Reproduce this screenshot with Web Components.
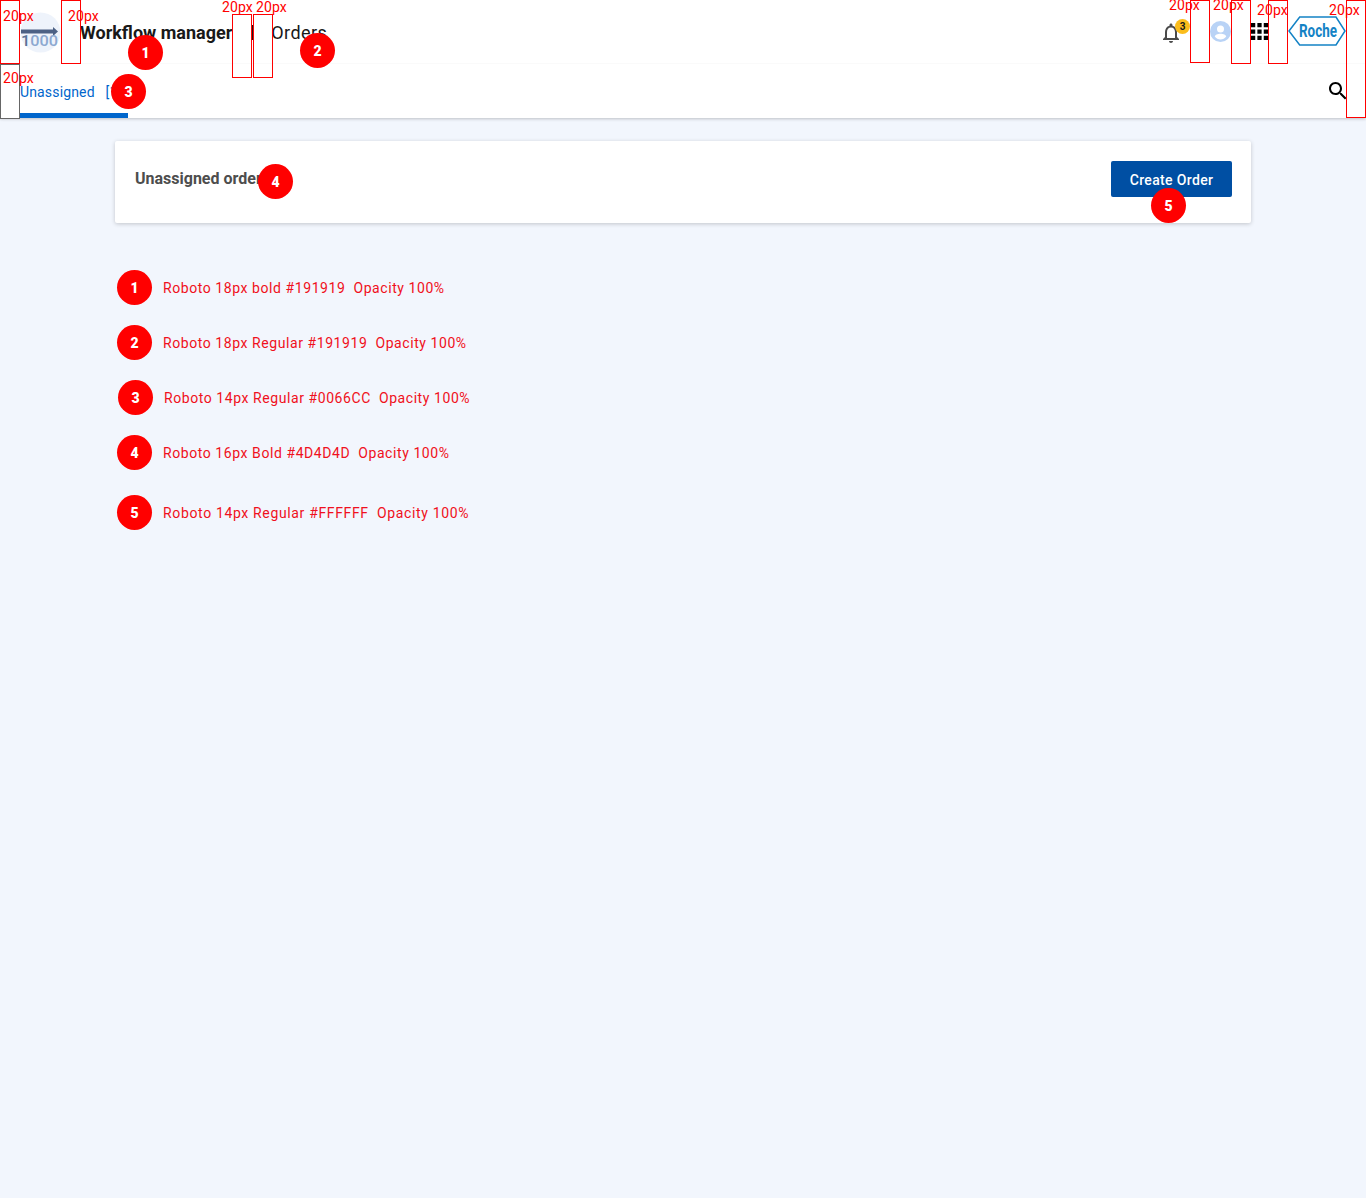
<!DOCTYPE html>
<html lang="en">
<head>
<meta charset="utf-8">
<title>Workflow manager</title>
<style>
  html, body { margin: 0; padding: 0; }
  body { background: #f2f6fd; font-family: Roboto, "Liberation Sans", sans-serif; min-height: 1198px; position: relative; overflow-x: hidden; }
</style>
</head>
<body>
<app-header title-text="Workflow manager" section="Orders" count="3"></app-header>
<tab-bar label="Unassigned" count="[1]"></tab-bar>

<main-area>
  <order-card title-text="Unassigned orders" action="Create Order"></order-card>
  <spec-list>
    <spec-row n="1">Roboto 18px bold #191919  Opacity 100%</spec-row>
    <spec-row n="2">Roboto 18px Regular #191919  Opacity 100%</spec-row>
    <spec-row n="3" nudge>Roboto 14px Regular #0066CC  Opacity 100%</spec-row>
    <spec-row n="4">Roboto 16px Bold #4D4D4D  Opacity 100%</spec-row>
    <spec-row n="5" wide>Roboto 14px Regular #FFFFFF  Opacity 100%</spec-row>
  </spec-list>
</main-area>

<!-- redline layer, these sit on top of the ui -->
<gap-box x="0" y="0" h="64" lx="3" ly="8"></gap-box>
<gap-box x="61" y="0" h="64" lx="68" ly="8"></gap-box>
<gap-box x="0" y="64" h="55" lx="3" ly="70" tone="#666"></gap-box>
<gap-box x="232" y="14" h="64" lx="222" ly="-1"></gap-box>
<gap-box x="253" y="14" h="64" lx="256" ly="-1"></gap-box>
<gap-box x="1190" y="0" h="63" lx="1169" ly="-3"></gap-box>
<gap-box x="1231" y="0" h="64" lx="1213" ly="-3"></gap-box>
<gap-box x="1268" y="0" h="64" lx="1257" ly="2"></gap-box>
<gap-box x="1346" y="0" h="118" lx="1329" ly="2"></gap-box>

<num-pin n="1" x="128" y="35"></num-pin>
<num-pin n="2" x="300" y="33"></num-pin>
<num-pin n="3" x="111" y="74"></num-pin>
<num-pin n="4" x="258" y="164"></num-pin>
<num-pin n="5" x="1151" y="188"></num-pin>

<script>
const sheet = (css) => `<style>${css}</style>`;

class AppHeader extends HTMLElement {
  connectedCallback() {
    const root = this.attachShadow({ mode: 'open' });
    root.innerHTML = sheet(`
      :host { display: flex; align-items: center; justify-content: space-between; height: 63px; padding: 0 20px; background: #fff; border-bottom: 1px solid #fafafa; color: #191919; font-size: 18px; position: relative; z-index: 1; }
      .left, .right { display: flex; align-items: center; }
      .right { gap: 20px; }
      .logo { width: 41px; height: 41px; margin: 1px 19px 0 0; display: block; }
      .app { font-weight: 700; padding-top: 2px; }
      .section { letter-spacing: .4px; padding-top: 2px; margin-left: -1px; }
      .sep { width: 2px; height: 15px; background: #191919; margin: 1px 19px 0 19px; }
      .bell { width: 31px; height: 32px; position: relative; }
      .bell svg { position: absolute; left: 0; top: 5px; }
      .badge { position: absolute; left: 16px; top: 3px; width: 15px; height: 15px; border-radius: 50%; background: #fbbd1c; color: #191919; font-size: 10px; font-weight: 700; line-height: 15px; text-align: center; }
      .roche { margin-top: -1px; }
      svg { display: block; }
    `) + `
      <div class="left">
        <svg class="logo" viewBox="0 0 41 41">
          <circle cx="20.500" cy="20.500" r="20" fill="#eef3fb"/>
          <rect x="1" y="17.500" width="33" height="4" fill="#4c6185"/>
          <path d="M33 15l5 4.500-5 4.500z" fill="#4c6185"/>
          <text x="1" y="34" font-family="Roboto, sans-serif" font-weight="500" font-size="14" textLength="37" lengthAdjust="spacingAndGlyphs" fill="#8ca8d0"><tspan fill="#5b7398">1</tspan>000</text>
        </svg>
        <span class="app">${this.getAttribute('title-text')}</span>
        <span class="sep"></span>
        <span class="section">${this.getAttribute('section')}</span>
      </div>
      <div class="right">
        <div class="bell">
          <svg width="24" height="24" viewBox="0 0 24 24" fill="#4a4a4a"><path d="M12 22c1.100 0 2-.9 2-2h-4c0 1.100.9 2 2 2zm6-6v-5c0-3.070-1.640-5.640-4.500-6.320V4c0-.83-.67-1.500-1.500-1.500s-1.500.67-1.500 1.500v.68C7.630 5.360 6 7.920 6 11v5l-2 2v1h16v-1l-2-2zm-2 1H8v-6c0-2.480 1.510-4.500 4-4.500s4 2.020 4 4.500v6z"/></svg>
          <span class="badge">${this.getAttribute('count')}</span>
        </div>
        <svg width="21" height="21" viewBox="0 0 24 24"><circle cx="12" cy="12" r="12" fill="#b9d3f6"/><circle cx="12" cy="9" r="4" fill="#fff"/><path d="M12 14.500c-3.300 0-6.500 1.500-6.500 3.200C7 19.800 9.400 21 12 21s5-1.200 6.500-3.300c0-1.700-3.200-3.200-6.500-3.200z" fill="#fff"/></svg>
        <svg width="17" height="17" viewBox="4 4 16 16" fill="#000"><path d="M4 8h4V4H4v4zm6 12h4v-4h-4v4zm-6 0h4v-4H4v4zm0-6h4v-4H4v4zm6 0h4v-4h-4v4zm6-10v4h4V4h-4zm-6 4h4V4h-4v4zm6 6h4v-4h-4v4zm0 6h4v-4h-4v4z"/></svg>
        <svg class="roche" width="58" height="30" viewBox="0 0 58 30">
          <path d="M1 15L11.700 1H48L57 15L48 29H11.700z" fill="#fff" stroke="#1482c5" stroke-width="1.500"/>
          <text x="30" y="20.500" text-anchor="middle" font-family="Roboto, sans-serif" font-weight="700" font-size="18" textLength="38" lengthAdjust="spacingAndGlyphs" fill="#1482c5">Roche</text>
        </svg>
      </div>
    `;
  }
}

class TabBar extends HTMLElement {
  connectedCallback() {
    const root = this.attachShadow({ mode: 'open' });
    root.innerHTML = sheet(`
      :host { display: flex; align-items: stretch; justify-content: space-between; height: 54px; padding: 0 20px; background: #fff; box-shadow: 0 1px 3px rgba(0, 0, 0, .22); position: relative; }
      .tab { width: 108px; box-sizing: border-box; border-bottom: 5px solid #0066cc; color: #0066cc; font-size: 14px; letter-spacing: .15px; padding-top: 19px; line-height: 18px; white-space: pre; }
      svg { display: block; margin: 15px -4px 0 0; }
    `) + `
      <div class="tab">${this.getAttribute('label')}   ${this.getAttribute('count')}</div>
      <svg width="24" height="24" viewBox="0 0 24 24" fill="#000"><path d="M15.500 14h-.79l-.28-.27C15.410 12.590 16 11.110 16 9.500 16 5.910 13.090 3 9.500 3S3 5.910 3 9.500 5.910 16 9.500 16c1.610 0 3.090-.59 4.230-1.570l.27.28v.79l5 4.990L20.490 19l-4.990-5zm-6 0C7.010 14 5 11.990 5 9.500S7.010 5 9.500 5 14 7.010 14 9.500 11.990 14 9.500 14z"/></svg>
    `;
  }
}

class MainArea extends HTMLElement {
  connectedCallback() {
    const root = this.attachShadow({ mode: 'open' });
    root.innerHTML = sheet(`
      :host { display: block; padding: 23px 115px 0; }
    `) + `<slot></slot>`;
  }
}

class OrderCard extends HTMLElement {
  connectedCallback() {
    const root = this.attachShadow({ mode: 'open' });
    root.innerHTML = sheet(`
      :host { display: flex; align-items: center; justify-content: space-between; height: 82px; box-sizing: border-box; padding: 20px 19px 26px 20px; background: #fff; border-radius: 2px; box-shadow: 0 1px 4px rgba(0, 0, 0, .2); }
      h2 { margin: 0 0 2px; font-size: 16px; font-weight: 700; color: #4d4d4d; }
      button { width: 121px; height: 36px; border: 0; border-radius: 2px; background: #004fa3; color: #fff; font: 500 14px Roboto, sans-serif; letter-spacing: .35px; padding: 2px 0 0; }
    `) + `
      <h2>${this.getAttribute('title-text')}</h2>
      <button type="button">${this.getAttribute('action')}</button>
    `;
  }
}

class SpecList extends HTMLElement {
  connectedCallback() {
    const root = this.attachShadow({ mode: 'open' });
    root.innerHTML = sheet(`
      :host { display: flex; flex-direction: column; gap: 20px; padding: 47px 0 0 2px; }
    `) + `<slot></slot>`;
  }
}

class SpecRow extends HTMLElement {
  connectedCallback() {
    const root = this.attachShadow({ mode: 'open' });
    root.innerHTML = sheet(`
      :host { display: flex; align-items: center; gap: 11px; height: 35px; color: #f01020; font-size: 14px; letter-spacing: .57px; white-space: pre; }
      :host([nudge]) { margin-left: 1px; }
      :host([wide]) { margin-top: 5px; letter-spacing: .65px; }
      .pin { width: 35px; height: 35px; flex: none; border-radius: 50%; background: #f00; color: #fff; font-weight: 900; font-size: 14px; letter-spacing: 0; line-height: 37px; text-align: center; }
    `) + `<span class="pin">${this.getAttribute('n')}</span><span><slot></slot></span>`;
  }
}

// numbered marker placed on top of the ui
class NumPin extends HTMLElement {
  connectedCallback() {
    const root = this.attachShadow({ mode: 'open' });
    root.innerHTML = sheet(`
      :host { position: absolute; left: ${this.getAttribute('x')}px; top: ${this.getAttribute('y')}px; width: 35px; height: 35px; border-radius: 50%; background: #f00; color: #fff; font: 900 14px/37px Roboto, sans-serif; text-align: center; z-index: 3; }
    `) + this.getAttribute('n');
  }
}

// measurement rectangle with its 20px label
class GapBox extends HTMLElement {
  connectedCallback() {
    const root = this.attachShadow({ mode: 'open' });
    const tone = this.getAttribute('tone') || '#f00';
    const x = +this.getAttribute('x');
    const y = +this.getAttribute('y');
    root.innerHTML = sheet(`
      :host { position: absolute; left: ${x}px; top: ${y}px; width: 20px; height: ${this.getAttribute('h')}px; box-sizing: border-box; border: 1px solid ${tone}; z-index: 2; }
      span { position: absolute; left: ${this.getAttribute('lx') - x - 1}px; top: ${this.getAttribute('ly') - y - 1}px; color: #f00; font: 14px/16px Roboto, sans-serif; letter-spacing: .1px; white-space: nowrap; }
    `) + `<span>20px</span>`;
  }
}

customElements.define('app-header', AppHeader);
customElements.define('tab-bar', TabBar);
customElements.define('main-area', MainArea);
customElements.define('order-card', OrderCard);
customElements.define('spec-list', SpecList);
customElements.define('spec-row', SpecRow);
customElements.define('num-pin', NumPin);
customElements.define('gap-box', GapBox);
</script>
</body>
</html>
